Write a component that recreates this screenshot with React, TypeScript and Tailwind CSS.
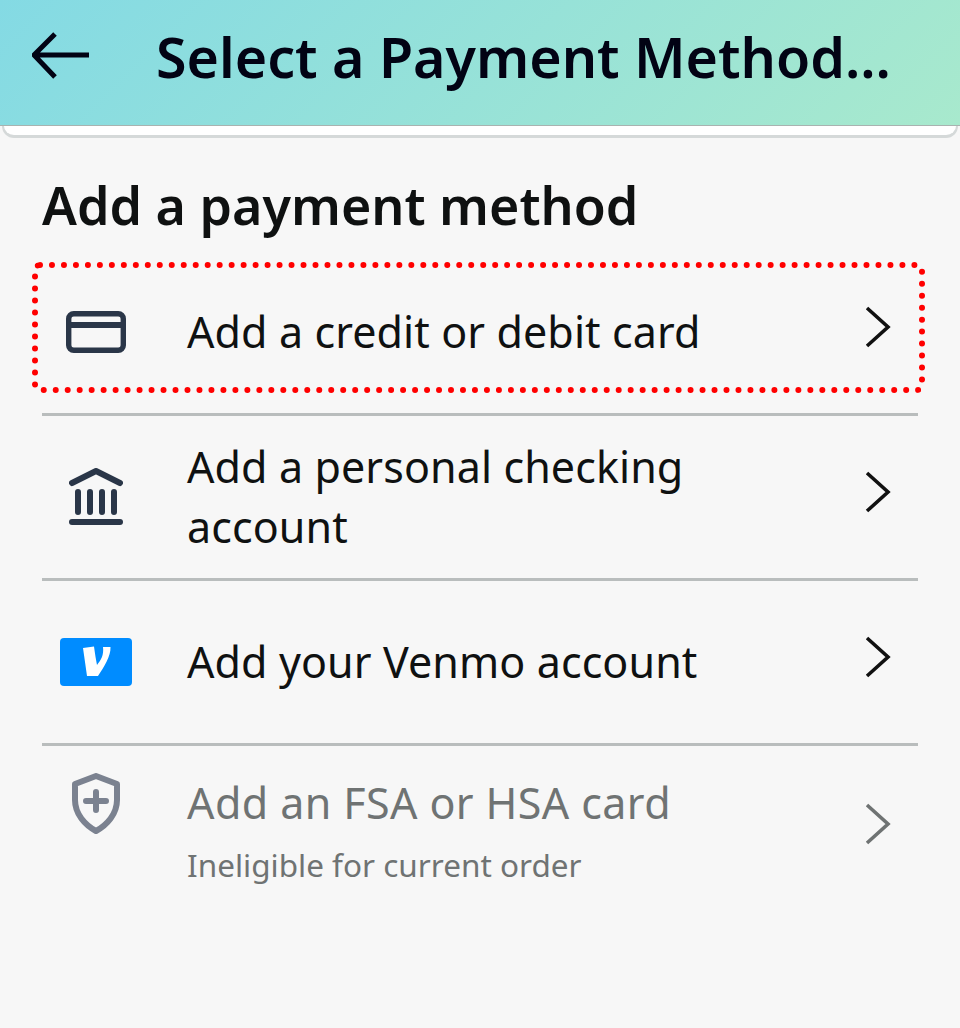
const font = 'font-["Noto_Sans",sans-serif]';

function Chevron({ color = '#111111' }: { color?: string }) {
  return (
    <svg width="28" height="44" viewBox="0 0 28 44" fill="none" className="mb-[10px] shrink-0">
      <path d="M3 3 L24 22 L3 41" stroke={color} strokeWidth="3.6" />
    </svg>
  );
}

function CardIcon() {
  return (
    <svg width="60" height="42" viewBox="0 0 60 42" fill="none">
      <rect x="2.700" y="2.700" width="54.600" height="36.600" rx="5" stroke="#2a3648" strokeWidth="5.400" />
      <rect x="2" y="11" width="56" height="6" fill="#2a3648" />
    </svg>
  );
}

function BankIcon() {
  return (
    <svg width="54" height="58" viewBox="0 0 54 58" fill="none" stroke="#2a3648" strokeLinecap="round">
      <path d="M3 15 L27 3 L51 15" strokeWidth="6" strokeLinejoin="round" />
      <path d="M9 24 V44 M21 24 V44 M33 24 V44 M45 24 V44" strokeWidth="6" />
      <path d="M3 54 H51" strokeWidth="6" />
    </svg>
  );
}

function VenmoIcon() {
  return (
    <svg width="72" height="48" viewBox="0 0 72 48" fill="none">
      <rect width="72" height="48" rx="4" fill="#008cff" />
      <path d="M23 10 L34 8.500 C35 16 36 22 37 27 C41 22 44 17 43 9 L50.500 9 C51 18 44 29 38 38 H27 Z" fill="#ffffff" />
    </svg>
  );
}

function ShieldIcon() {
  return (
    <svg width="50" height="62" viewBox="0 0 50 62" fill="none" stroke="#7b8290" strokeLinecap="round">
      <path d="M25 3 L46 11 V27 C46 41 36 52 25 58 C14 52 4 41 4 27 V11 Z" strokeWidth="6" strokeLinejoin="round" />
      <path d="M25 19 V37 M15 28 H35" strokeWidth="6" />
    </svg>
  );
}

export default function App() {
  return (
    <div className={`${font} w-[960px] h-[1028px] overflow-hidden bg-[#f7f7f7]`}>
      <header className="h-[126px] flex items-center bg-[linear-gradient(135deg,#84dae4,#a8e9cd)] border-b border-b-[#a9b3b0] pl-[32px]">
        <svg width="58" height="48" viewBox="0 0 58 48" fill="none" className="mb-[14px] shrink-0">
          <path d="M23 2 L2 23 L23 45 M2 23 H57" stroke="#020314" strokeWidth="5" />
        </svg>
        <h1 className="ml-[66px] mb-[12px] text-[55.500px] leading-none font-semibold text-[#020314] whitespace-nowrap">
          Select a Payment Method...
        </h1>
      </header>
      <div className="h-[12px] mx-[2px] bg-white border-b-[3px] border-x-[2px] border-[#d5d9d9] rounded-b-[24px]" />
      <main className="px-[42px]">
        <h2 className="h-[113px] pt-[35px] text-[52px] leading-[64px] font-semibold text-[#0f1111]">
          Add a payment method
        </h2>
        <div className="relative h-[165px] flex items-center border-b-[3px] border-[#b9bdbd]">
          <div className="absolute -left-[10px] -right-[7px] top-[11px] h-[131px] border-[6px] border-dotted border-[#ff0000] rounded-[8px]" />
          <div className="w-[108px] pl-[24px] flex items-center"><CardIcon /></div>
          <div className="ml-[37px] flex-1 text-[43px] tracking-[0.1px] leading-[60px] text-[#0f1111]">Add a credit or debit card</div>
          <div className="pr-[26px] flex"><Chevron /></div>
        </div>
        <div className="h-[165px] flex items-center border-b-[3px] border-[#b9bdbd]">
          <div className="w-[108px] pl-[27px] flex items-center"><BankIcon /></div>
          <div className="ml-[37px] flex-1 text-[43px] tracking-[0.1px] leading-[60px] text-[#0f1111]">
            Add a personal checking
            <br />
            account
          </div>
          <div className="pr-[26px] flex"><Chevron /></div>
        </div>
        <div className="h-[165px] flex items-center border-b-[3px] border-[#b9bdbd]">
          <div className="w-[108px] pl-[18px] flex items-center"><VenmoIcon /></div>
          <div className="ml-[37px] flex-1 text-[43px] tracking-[0.1px] leading-[60px] text-[#0f1111]">Add your Venmo account</div>
          <div className="pr-[26px] flex"><Chevron /></div>
        </div>
        <div className="h-[165px] flex items-center">
          <div className="w-[108px] pl-[29px] mb-[50px] flex items-center"><ShieldIcon /></div>
          <div className="ml-[37px] flex-1">
            <div className="text-[43px] tracking-[0.4px] leading-[60px] text-[#6f7373]">Add an FSA or HSA card</div>
            <div className="mt-[12px] text-[31.500px] leading-[40px] text-[#6f7373]">Ineligible for current order</div>
          </div>
          <div className="pr-[26px] flex"><Chevron color="#6f7373" /></div>
        </div>
      </main>
    </div>
  );
}
